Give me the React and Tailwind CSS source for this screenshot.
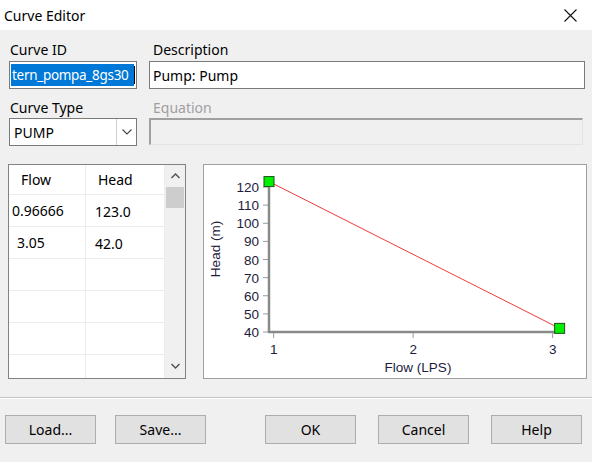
import React from "react";

const rows = [
  { flow: "0.96666", head: "123.0", fp: "pl-[3px]" },
  { flow: "3.05", head: "42.0", fp: "pl-[8px]" },
  { flow: "", head: "" },
  { flow: "", head: "" },
  { flow: "", head: "" },
  { flow: "", head: "" },
];

const yTicks = [120, 110, 100, 90, 80, 70, 60, 50, 40];
const xTicks = [1, 2, 3];

const yOf = (v) => 167 - (v - 40) * 1.8125;
const xOf = (f) => 65 + (f - 0.96666) * 139.5;

const Chart = () => {
  const p1 = { x: xOf(0.96666), y: yOf(123) };
  const p2 = { x: xOf(3.05), y: yOf(42) };
  return (
    <svg width="382" height="213" className="block">
      <line x1={p1.x} y1={p1.y} x2={p2.x} y2={p2.y} stroke="#f23a3a" strokeWidth="1" />
      {/* y axis ticks */}
      {yTicks.map((v) => (
        <g key={v}>
          <line x1="59" y1={yOf(v)} x2="64" y2={yOf(v)} stroke="#9a9a9a" strokeWidth="1" />
          <text
            x="55"
            y={yOf(v) + 5}
            textAnchor="end"
            fontSize="13.5"
            fill="#1c1c3c"
            fontFamily="Liberation Sans, Arial, sans-serif"
          >
            {v}
          </text>
        </g>
      ))}
      {xTicks.map((v) => (
        <g key={v}>
          <line x1={xOf(v)} y1="168" x2={xOf(v)} y2="173" stroke="#9a9a9a" strokeWidth="1" />
          <text
            x={xOf(v)}
            y="189"
            textAnchor="middle"
            fontSize="13.5"
            fill="#1c1c3c"
            fontFamily="Liberation Sans, Arial, sans-serif"
          >
            {v}
          </text>
        </g>
      ))}
      <line x1="65" y1="15" x2="65" y2="168" stroke="#8a8a8a" strokeWidth="2.5" />
      <line x1="64" y1="167" x2={p2.x} y2="167" stroke="#8a8a8a" strokeWidth="2.5" />
      <text
        x="214"
        y="207"
        textAnchor="middle"
        fontSize="13.5"
        fill="#1c1c3c"
        fontFamily="Liberation Sans, Arial, sans-serif"
      >
        Flow (LPS)
      </text>
      <text
        x="0"
        y="0"
        transform="translate(16 84) rotate(-90)"
        textAnchor="middle"
        fontSize="13.5"
        fill="#1c1c3c"
        fontFamily="Liberation Sans, Arial, sans-serif"
      >
        Head (m)
      </text>
      <rect x={p1.x - 5} y={p1.y - 5} width="10" height="10" fill="#00f000" stroke="#1f4f1f" strokeWidth="1" />
      <rect x={p2.x - 5} y={p2.y - 5} width="10" height="10" fill="#00f000" stroke="#1f4f1f" strokeWidth="1" />
    </svg>
  );
};

const Btn = ({ label, className }) => (
  <button
    className={`h-[29px] w-[91px] border border-[#adadad] bg-[#e1e1e1] text-[14px] text-black ${className || ""}`}
  >
    {label}
  </button>
);

export default function App() {
  return (
    <div
      className="w-[592px] h-[462px] bg-[#f0f0f0] overflow-hidden flex flex-col text-black"
      style={{ fontFamily: '"Noto Sans", "Open Sans", sans-serif' }}
    >
      {/* title bar */}
      <div className="h-[30px] bg-white flex items-center justify-between pl-[4px] pr-[15px]">
        <span className="text-[14px]">Curve Editor</span>
        <svg width="13" height="13" viewBox="0 0 13 13">
          <path d="M0.5 0.5 L12.5 12.5 M12.5 0.5 L0.5 12.5" stroke="#111" strokeWidth="1.1" />
        </svg>
      </div>

      {/* fields */}
      <div className="flex gap-[12px] pl-[9px] pt-[10px]">
        <div className="w-[128px] flex flex-col">
          <div className="h-[21px] text-[14px] leading-[20px] pl-[1px]">Curve ID</div>
          <div className="h-[28px] bg-white border border-[#7a7a7a] flex items-center pl-[1px] overflow-hidden">
            <span className="bg-[#0078d7] text-white text-[13.5px] tracking-[-0.3px] leading-[22px] h-[22px] whitespace-nowrap w-[123px] pl-[1px]">
              tern_pompa_8gs30
            </span>
            <span className="w-[1px] h-[18px] bg-black" />
          </div>
          <div className="h-[20px] mt-[9px] text-[14px] leading-[20px] pl-[1px]">Curve Type</div>
          <div className="h-[28px] bg-white border border-[#7a7a7a] flex items-center">
            <span className="flex-1 pl-[4px] text-[14px]">PUMP</span>
            <span className="w-px h-[26px] bg-[#d0d0d0]" />
            <span className="w-[19px] flex justify-center">
              <svg width="10" height="6" viewBox="0 0 10 6">
                <path d="M0.5 0.5 L5 5 L9.5 0.5" fill="none" stroke="#444" strokeWidth="1.1" />
              </svg>
            </span>
          </div>
        </div>
        <div className="w-[436px] flex flex-col">
          <div className="h-[21px] text-[14px] leading-[20px] pl-[4px]">Description</div>
          <div className="h-[28px] bg-white border border-[#7a7a7a] flex items-center pl-[3px] text-[14px]">
            Pump: Pump
          </div>
          <div className="h-[20px] mt-[9px] text-[14px] leading-[20px] pl-[4px] text-[#a0a0a0]">Equation</div>
          <div className="h-[27px] w-[434px] border-t-2 border-l-2 border-[#a0a0a0] border-b border-r border-b-[#e3e3e3] border-r-[#e3e3e3] bg-[#f0f0f0]" />
        </div>
      </div>

      {/* table + chart */}
      <div className="flex gap-[17px] pl-[8px] mt-[18px]">
        <div className="w-[178px] h-[215px] border border-[#828282] bg-white flex overflow-hidden">
          <div className="w-[155px] flex flex-col text-[14px]">
            <div className="h-[30px] flex border-b border-[#ececec] shrink-0">
              <div className="w-[77px] border-r border-[#ececec] pl-[12px] flex items-center">Flow</div>
              <div className="w-[78px] pl-[12px] flex items-center">Head</div>
            </div>
            {rows.map((r, i) => (
              <div key={i} className="h-[32px] flex border-b border-[#ececec] shrink-0">
                <div className={`w-[77px] border-r border-[#ececec] flex items-center ${r.fp || ""}`}>
                  {r.flow}
                </div>
                <div className="w-[78px] pl-[9px] flex items-center pt-[2px]">{r.head}</div>
              </div>
            ))}
          </div>
          <div className="w-px bg-[#ececec]" />
          <div className="flex-1 bg-[#f0f0f0] flex flex-col items-center">
            <div className="h-[22px] flex items-center justify-center">
              <svg width="9" height="6" viewBox="0 0 9 6">
                <path d="M0.5 5 L4.5 1 L8.5 5" fill="none" stroke="#505050" strokeWidth="1.4" />
              </svg>
            </div>
            <div className="w-[18px] h-[21px] bg-[#cdcdcd]" />
            <div className="flex-1" />
            <div className="h-[24px] flex items-center justify-center">
              <svg width="9" height="6" viewBox="0 0 9 6">
                <path d="M0.5 1 L4.5 5 L8.5 1" fill="none" stroke="#505050" strokeWidth="1.4" />
              </svg>
            </div>
          </div>
        </div>
        <div className="w-[384px] h-[215px] border border-[#a0a0a0] bg-white">
          <Chart />
        </div>
      </div>

      {/* separator */}
      <div className="mt-[18px] h-px bg-[#c4c4c4]" />
      <div className="h-px bg-white" />

      {/* buttons */}
      <div className="flex pl-[5px] mt-[16px]">
        <Btn label="Load..." />
        <Btn label="Save..." className="ml-[19px]" />
        <Btn label="OK" className="ml-[59px]" />
        <Btn label="Cancel" className="ml-[22px]" />
        <Btn label="Help" className="ml-[22px]" />
      </div>
    </div>
  );
}
